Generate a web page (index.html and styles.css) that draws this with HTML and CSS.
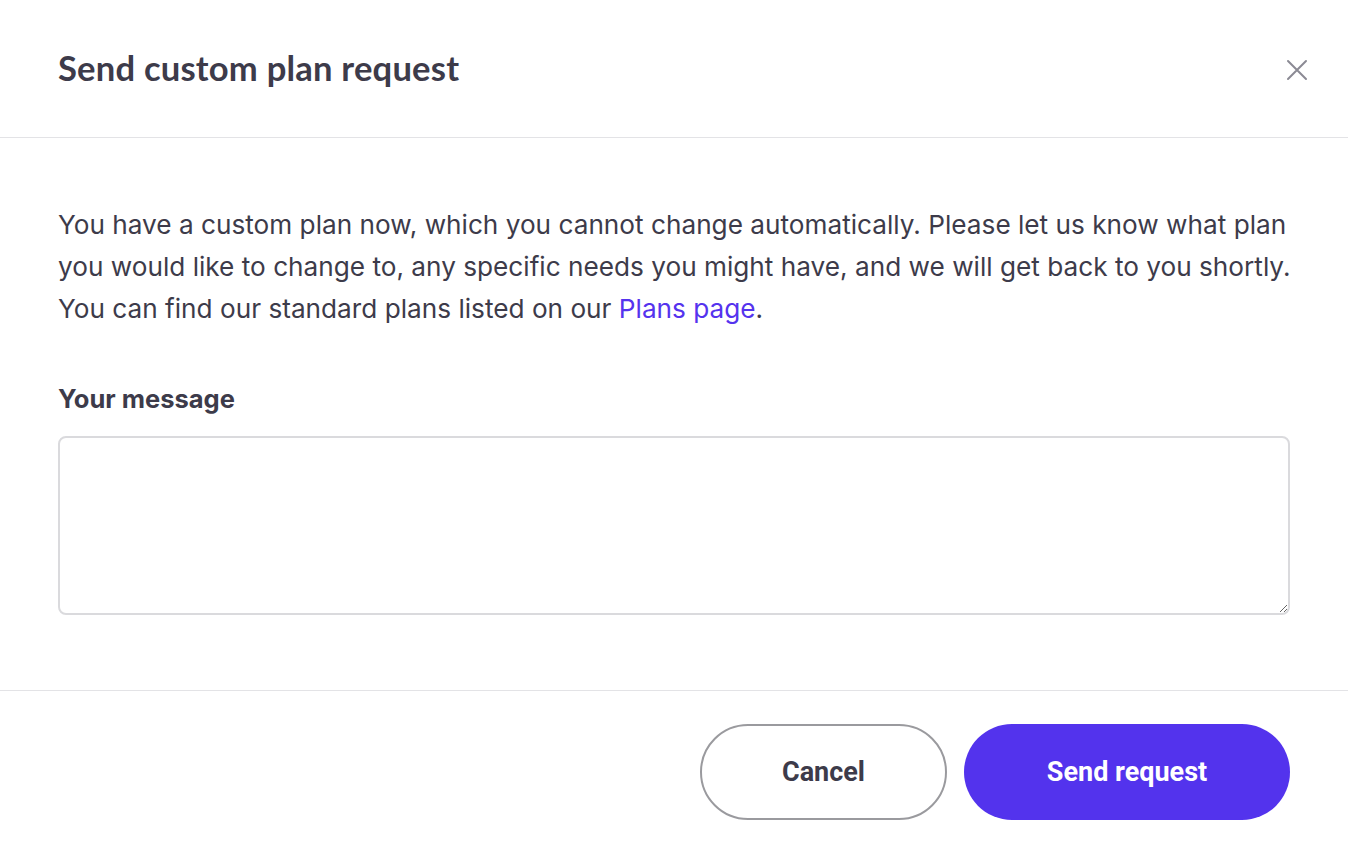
FILE: index.html
```html
<!DOCTYPE html>
<html lang="en">
<head>
    <meta charset="UTF-8">
    <meta name="viewport" content="width=device-width, initial-scale=1.0">
    <title>Send custom plan request</title>
    <link rel="stylesheet" href="styles.css">
</head>
<body>
    <div class="modal">
        <div class="modal-header">
            <h1>Send custom plan request</h1>
            <button class="close" aria-label="Close">
                <svg width="22" height="22" viewBox="0 0 22 22">
                    <path d="M2 2 L20 20 M20 2 L2 20" stroke="#8b8a94" stroke-width="2" fill="none" stroke-linecap="round"/>
                </svg>
            </button>
        </div>
        <div class="modal-body">
            <p>You have a custom plan now, which you cannot change automatically. Please let us know what plan<br>
            you would like to change to, any specific needs you might have, and we will get back to you shortly.<br>
            You can find our standard plans listed on our <a href="#">Plans page</a>.</p>
            <label for="message">Your message</label>
            <textarea id="message"></textarea>
        </div>
        <div class="modal-footer">
            <button class="btn btn-cancel">Cancel</button>
            <button class="btn btn-primary">Send request</button>
        </div>
    </div>
</body>
</html>
```

FILE: styles.css
```css
body {
    margin: 0;
    background-color: #fff;
    font-family: Inter, Roboto, "Liberation Sans", sans-serif;
    color: #3d3b4a;
}
.modal {
    width: 1348px;
    height: 844px;
    display: flex;
    flex-direction: column;
}
.modal-header {
    height: 138px;
    box-sizing: border-box;
    border-bottom: 1px solid #e3e3e6;
    display: flex;
    align-items: center;
    justify-content: space-between;
    padding: 0 40px 0 58px;
}
.modal-header h1 {
    margin: 0 0 2px;
    font-family: Lato, "Open Sans", sans-serif;
    font-weight: 700;
    font-size: 34.6px;
    color: #3d3b4a;
    letter-spacing: 0.2px;
}
.close {
    background: none;
    border: none;
    padding: 0;
    width: 22px;
    height: 22px;
    margin-top: 2px;
    cursor: pointer;
}
.modal-body {
    padding: 66px 58px 75px;
    border-bottom: 1px solid #e3e3e6;
    display: flex;
    flex-direction: column;
}
.modal-body p {
    margin: 0 0 53px;
    font-size: 26.2px;
    line-height: 42px;
    white-space: nowrap;
}
.modal-body a {
    color: #5533ee;
    text-decoration: none;
}
.modal-body label {
    font-size: 25.5px;
    font-weight: 700;
    line-height: 32px;
    margin-bottom: 21px;
}
.modal-body textarea {
    height: 179px;
    box-sizing: border-box;
    border: 2px solid #dadadd;
    border-radius: 8px;
    font-family: inherit;
    font-size: 22px;
    resize: vertical;
}
.modal-footer {
    display: flex;
    justify-content: flex-end;
    gap: 17px;
    padding: 33px 58px 0;
}
.btn {
    height: 96px;
    border-radius: 48px;
    font-family: Roboto, "Liberation Sans", sans-serif;
    font-size: 27px;
    font-weight: 700;
    cursor: pointer;
}
.btn-cancel {
    width: 247px;
    background: #fff;
    border: 2px solid #9a9a9e;
    color: #3d3b4a;
}
.btn-primary {
    width: 326px;
    background: #5333ed;
    border: none;
    color: #fff;
}
```
